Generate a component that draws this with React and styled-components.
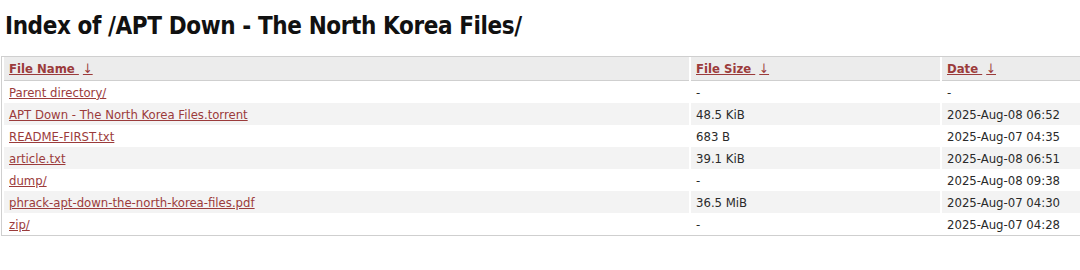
import React from 'react'
import styled, { createGlobalStyle } from 'styled-components'

const colors = {
  text: '#2a2a2a',
  link: '#9b3b3b',
  border: '#cfcfcf',
  head: '#ececec',
  stripe: '#f3f3f3',
}

const GlobalStyle = createGlobalStyle`
  html, body {
    margin: 0;
    padding: 0;
    background: #fff;
    overflow: hidden;
  }
  body {
    font-family: "DejaVu Sans Condensed", "DejaVu Sans", Verdana, sans-serif;
    font-stretch: condensed;
    color: ${colors.text};
  }
`

const Page = styled.div`
  padding: 0 0 0 1px;
`

const Title = styled.h1`
  margin: 0;
  padding: 12px 0 0 4px;
  height: 56px;
  box-sizing: border-box;
  font-size: 24px;
  line-height: 28px;
  font-weight: 600;
  letter-spacing: -0.4px;
  color: #111;
  white-space: nowrap;
`

const Table = styled.table`
  width: 1110px;
  border: 1px solid ${colors.border};
  border-collapse: separate;
  border-spacing: 2px 0;
  font-size: 13px;
`

const HeadCell = styled.th`
  text-align: left;
  padding: 0 5px;
  height: 23px;
  background: ${colors.head};
  border-bottom: 1px solid ${colors.border};
  font-weight: bold;
  width: ${props => props.width || 'auto'};
`

const Row = styled.tr`
  background: ${props => (props.striped ? colors.stripe : '#fff')};
`

const Cell = styled.td`
  padding: 0 5px;
  height: 22px;
  white-space: nowrap;
`

const Link = styled.a`
  color: ${colors.link};
  text-decoration: underline;
`

const Arrow = styled.span`
  margin-left: 4px;
  font-weight: normal;
`

const files = [
  { name: 'Parent directory/', size: '-', date: '-' },
  { name: 'APT Down - The North Korea Files.torrent', size: '48.5 KiB', date: '2025-Aug-08 06:52' },
  { name: 'README-FIRST.txt', size: '683 B', date: '2025-Aug-07 04:35' },
  { name: 'article.txt', size: '39.1 KiB', date: '2025-Aug-08 06:51' },
  { name: 'dump/', size: '-', date: '2025-Aug-08 09:38' },
  { name: 'phrack-apt-down-the-north-korea-files.pdf', size: '36.5 MiB', date: '2025-Aug-07 04:30' },
  { name: 'zip/', size: '-', date: '2025-Aug-07 04:28' },
]

const App = () => (
  <Page>
    <GlobalStyle />
    <Title>Index of /APT Down - The North Korea Files/</Title>
    <Table>
      <thead>
        <tr>
          <HeadCell width='675px'>
            <Link href='#'>File Name <Arrow>↓</Arrow></Link>
          </HeadCell>
          <HeadCell width='239px'>
            <Link href='#'>File Size <Arrow>↓</Arrow></Link>
          </HeadCell>
          <HeadCell>
            <Link href='#'>Date <Arrow>↓</Arrow></Link>
          </HeadCell>
        </tr>
      </thead>
      <tbody>
        {files.map((f, i) => (
          <Row key={f.name} striped={i % 2 === 1}>
            <Cell>
              <Link href='#'>{f.name}</Link>
            </Cell>
            <Cell>{f.size}</Cell>
            <Cell>{f.date}</Cell>
          </Row>
        ))}
      </tbody>
    </Table>
  </Page>
)

export default App
